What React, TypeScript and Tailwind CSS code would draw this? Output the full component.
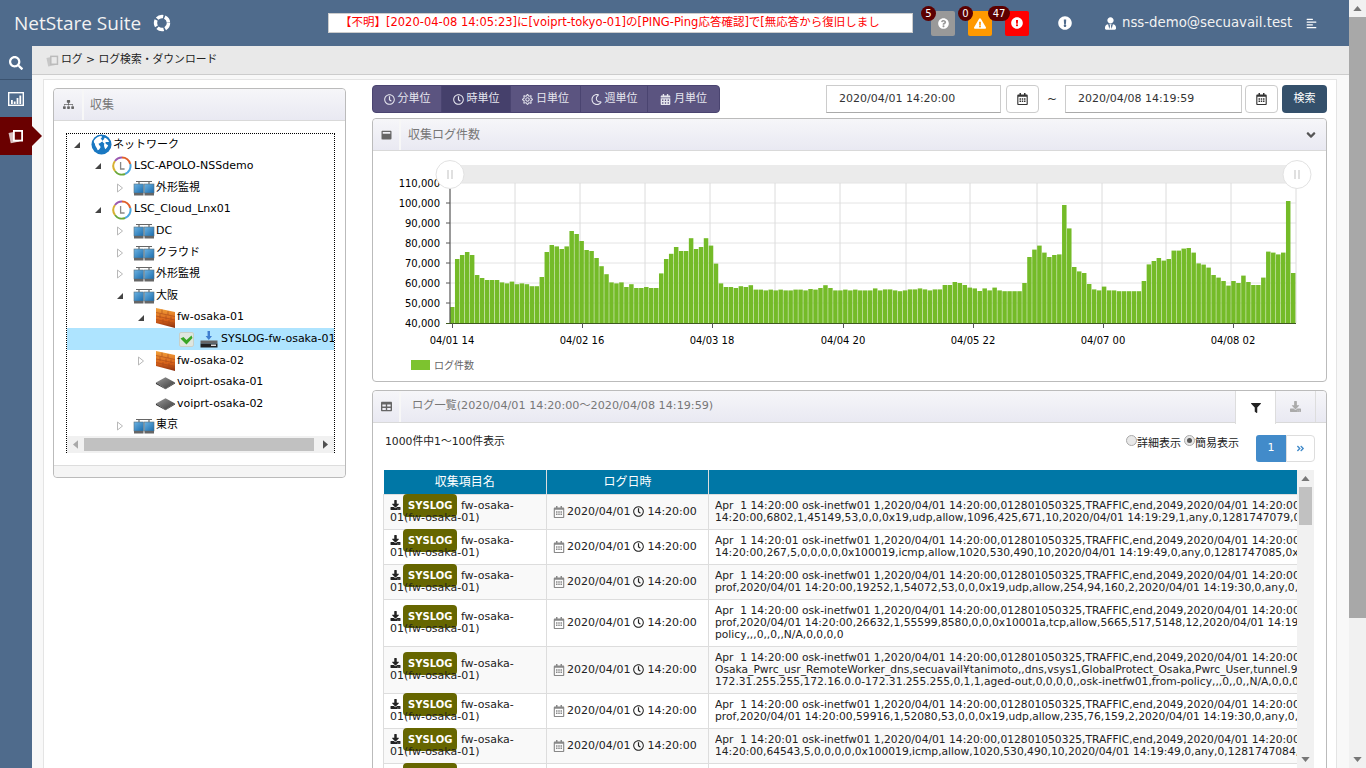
import {
  FaAlignLeft,
  FaAngleDoubleRight,
  FaAngleDown,
  FaCalendarAlt,
  FaDownload,
  FaExclamationCircle,
  FaFilter,
  FaQuestionCircle,
  FaRegCalendarAlt,
  FaRegClock,
  FaRegMoon,
  FaRegSun,
  FaSearch,
  FaSitemap,
  FaTable,
  FaUserTie,
  FaWindowMaximize,
  FaExclamationTriangle,
} from 'react-icons/fa'

const bars = [
  48, 72, 74, 75.5, 74, 64, 62.5, 61.5, 61.5, 61.5,
  60.3, 59.8, 60.7, 59.4, 59.8, 59.4, 58.4, 58.4, 63, 75.5,
  79, 78.3, 77, 78.3, 86, 84.5, 81, 76.5, 76, 72.5,
  68.4, 64.4, 60.3, 59.8, 60.3, 58, 59.4, 57.5, 57.5, 58,
  57.5, 57.5, 64.8, 72, 74.6, 78, 76, 76, 82.4, 77,
  78, 82.4, 78.7, 69.7, 59.8, 58, 58, 57.5, 58.4, 58,
  58.9, 56.7, 56.7, 56.3, 56.7, 56.3, 56.7, 56.3, 56.3, 56.7,
  56.7, 56.3, 57, 56.7, 57.5, 58.9, 57.5, 56.3, 56.3, 56.7,
  56.3, 56.7, 56.3,
  56.3, 56.3, 57.3, 56.3, 56.8, 56.8, 56.3, 55.9, 56.3, 56.8,
  56.8, 57.3, 56.8, 56.3, 56.8, 56.8, 59, 59, 60.5, 60,
  59, 57.7, 57.3, 56, 57.3, 56.3, 57.7, 56.3, 55.9, 55.9,
  55.9, 55.9, 60, 73, 76.7, 78.7, 75.2, 73, 74, 74.3,
  99, 87.3, 68, 65.8, 65, 59.5, 56.8, 56.3, 58.2, 56.3,
  56.3, 55.9, 55.9, 55.9, 55.9, 55.9, 61, 69.3, 71, 72.5,
  71.2, 72, 76.2, 76.2, 77.2, 77.5, 75.2, 69.8, 69.2, 67.7,
  64, 62.7, 61, 58.7, 61, 60, 63.7, 60.5, 59, 59,
  62.7, 75.7, 75.2, 74.3, 75.2, 101, 65,
]

const yLabels = ['110,000', '100,000', '90,000', '80,000', '70,000', '60,000', '50,000', '40,000']
const gridX = [515, 580, 645, 710, 775, 840, 906, 970, 1037, 1102, 1166, 1231, 1296]
const xTicks = [
  { x: 452.5, label: '04/01 14' },
  { x: 582.5, label: '04/02 16' },
  { x: 712.5, label: '04/03 18' },
  { x: 843.5, label: '04/04 20' },
  { x: 973.5, label: '04/05 22' },
  { x: 1103.5, label: '04/07 00' },
  { x: 1233.5, label: '04/08 02' },
]

const head1 = ' 1,2020/04/01 14:20:00,012801050325,TRAFFIC,end,2049,2020/04/01 14:20:00'
const rows = [
  { time: '14:20:00', lines: ['14:20:00,6802,1,45149,53,0,0,0x19,udp,allow,1096,425,671,10,2020/04/01 14:19:29,1,any,0,1281747079,0x0'] },
  { time: '14:20:01', lines: ['14:20:00,267,5,0,0,0,0,0x100019,icmp,allow,1020,530,490,10,2020/04/01 14:19:49,0,any,0,1281747085,0x0'] },
  { time: '14:20:00', lines: ['prof,2020/04/01 14:20:00,19252,1,54072,53,0,0,0x19,udp,allow,254,94,160,2,2020/04/01 14:19:30,0,any,0,128'] },
  { time: '14:20:00', lines: ['prof,2020/04/01 14:20:00,26632,1,55599,8580,0,0,0x10001a,tcp,allow,5665,517,5148,12,2020/04/01 14:19:30', 'policy,,,0,,0,,N/A,0,0,0,0'] },
  { time: '14:20:00', lines: ['Osaka_Pwrc_usr_RemoteWorker_dns,secuavail¥tanimoto,,dns,vsys1,GlobalProtect_Osaka,Pwrc_User,tunnel.99', '172.31.255.255,172.16.0.0-172.31.255.255,0,1,1,aged-out,0,0,0,0,,osk-inetfw01,from-policy,,,0,,0,,N/A,0,0,0,0'] },
  { time: '14:20:00', lines: ['prof,2020/04/01 14:20:00,59916,1,52080,53,0,0,0x19,udp,allow,235,76,159,2,2020/04/01 14:19:30,0,any,0,128'] },
  { time: '14:20:01', lines: ['14:20:00,64543,5,0,0,0,0,0x100019,icmp,allow,1020,530,490,10,2020/04/01 14:19:49,0,any,0,1281747084,0x0'] },
  { time: '14:20:00', lines: ['14:20:00,6802,1,45149,53,0,0,0x19,udp,allow,1096,425,671,10,2020/04/01 14:19:29,1,any,0,1281747079,0x0'] },
]

const units = [
  { label: '分単位', Icon: FaRegClock, active: false, w: 'w-[69px]' },
  { label: '時単位', Icon: FaRegClock, active: true, w: 'w-[69px]' },
  { label: '日単位', Icon: FaRegSun, active: false, w: 'w-[70px]' },
  { label: '週単位', Icon: FaRegMoon, active: false, w: 'w-[67px]' },
  { label: '月単位', Icon: FaCalendarAlt, active: false, w: 'w-[71px]' },
]

const levelPad = ['pl-[5px]', 'pl-[26px]', 'pl-[48px]', 'pl-[69px]']

function PagesIcon({ className }: { className: string }) {
  return (
    <svg viewBox="0 0 16 16" className={className}>
      <rect x="1.5" y="4" width="9" height="10.5" transform="rotate(-12 6 9)" fill="currentColor" opacity="0.75" />
      <rect x="5" y="2" width="10" height="11.5" fill="currentColor" />
      <rect x="6.8" y="3.8" width="6.4" height="7.9" fill="var(--hole)" />
    </svg>
  )
}

function ChartIcon() {
  return (
    <svg viewBox="0 0 16 14" className="w-[16px] h-[14px]">
      <rect x="0.7" y="0.7" width="14.6" height="12.6" fill="none" stroke="white" strokeWidth="1.4" />
      <path d="M3 12h1.8V8H3zM5.8 12h1.8V9.5H5.8zM8.6 12h1.8V6H8.6zM11.4 12h1.8V3.5h-1.8z" fill="white" />
    </svg>
  )
}

function GlobeIcon() {
  return (
    <svg viewBox="0 0 22 22" className="w-[21px] h-[21px]">
      <circle cx="11" cy="11" r="10.5" fill="#1a78c2" />
      <path d="M3 7c2-3 5-5 8-5 1 1 0 2-1 3 1 1 2 1 2 3-2 0-2 2-4 2 0 2 2 2 2 4-1 2-2 3-3 3-1-3-3-4-3-7-1-1-1-2-1-3zM14 4c2 0 4 2 5 4-1 1-3 0-4 1 0 2 2 2 3 3-1 2-2 3-3 4-1-2-2-4-1-6-1-1-2-1-2-3 1-1 2-1 2-3z" fill="white" />
    </svg>
  )
}

function CollectorIcon() {
  return (
    <svg viewBox="0 0 20 20" className="w-[20px] h-[20px]">
      <circle cx="10" cy="10" r="8.5" fill="white" />
      <path d="M10 1.5A8.5 8.5 0 0 1 18.2 8" fill="none" stroke="#e0602a" strokeWidth="2" />
      <path d="M18.3 8A8.5 8.5 0 0 1 13 18" fill="none" stroke="#4aa6e0" strokeWidth="2" />
      <path d="M13 18A8.5 8.5 0 0 1 3 15" fill="none" stroke="#6aa83a" strokeWidth="2" />
      <path d="M3 15A8.5 8.5 0 0 1 3 5" fill="none" stroke="#d8b030" strokeWidth="2" />
      <path d="M3 5A8.5 8.5 0 0 1 10 1.5" fill="none" stroke="#9a58b0" strokeWidth="2" />
      <path d="M8.6 6v7h4" fill="none" stroke="#888" strokeWidth="1.3" />
    </svg>
  )
}

function NetworkIcon() {
  return (
    <svg viewBox="0 0 22 16" className="w-[22px] h-[16px]">
      <defs>
        <linearGradient id="scr" x1="0" y1="0" x2="1" y2="1">
          <stop offset="0" stopColor="#6db3e2" />
          <stop offset="1" stopColor="#1a6cad" />
        </linearGradient>
      </defs>
      <path d="M3 1.5h16M6 1.5V5M16 1.5V5" stroke="#666" strokeWidth="1.2" fill="none" />
      <rect x="1" y="4" width="9.5" height="9" fill="url(#scr)" stroke="#56707f" strokeWidth="0.6" />
      <rect x="11.5" y="4" width="9.5" height="9" fill="url(#scr)" stroke="#56707f" strokeWidth="0.6" />
      <rect x="1" y="13" width="9.5" height="2.5" fill="#666" />
      <rect x="11.5" y="13" width="9.5" height="2.5" fill="#666" />
    </svg>
  )
}

function WallIcon() {
  return (
    <svg viewBox="0 0 21 22" className="w-[21px] h-[22px]">
      <defs>
        <linearGradient id="wall" x1="0" y1="0" x2="0" y2="1">
          <stop offset="0" stopColor="#f2a23a" />
          <stop offset="0.6" stopColor="#d9631a" />
          <stop offset="1" stopColor="#8a3010" />
        </linearGradient>
      </defs>
      <path d="M1 1l19 4v16L1 16z" fill="url(#wall)" />
      <path d="M1 5.5l19 4M1 9l19 4M1 12.5l19 4M7 2.5v4M13 4v4M5 7v4M11 8.5v4M16 9.5v4M8 12v4M14 13v4" stroke="#a8481a" strokeWidth="0.6" fill="none" />
    </svg>
  )
}

function RouterIcon() {
  return (
    <svg viewBox="0 0 22 14" className="w-[21px] h-[14px]">
      <defs>
        <linearGradient id="rt" x1="0" y1="0" x2="1" y2="1">
          <stop offset="0" stopColor="#9a9a9a" />
          <stop offset="1" stopColor="#3a3a3a" />
        </linearGradient>
      </defs>
      <path d="M11 1l10 5.5-10 6.5L1 6.5z" fill="url(#rt)" />
      <path d="M1 6.5v1.5l10 5.5 10-6V6.5l-10 6.5z" fill="#333" />
    </svg>
  )
}

function CheckIcon() {
  return (
    <svg viewBox="0 0 15 15" className="w-[15px] h-[15px] shrink-0">
      <rect x="0.5" y="0.5" width="14" height="14" rx="1.5" fill="#dfe6df" stroke="#c8d0c8" />
      <path d="M1.5 6.5l3-1.5 3 3 5-4.5 1 2.5-6 6.5z" fill="#38a626" />
    </svg>
  )
}

function SyslogIcon() {
  return (
    <svg viewBox="0 0 18 18" className="w-[18px] h-[18px]">
      <path d="M7.5 1h2.5v5h2l-3.2 4-3.2-4h2z" fill="#3f7fd0" />
      <rect x="0.5" y="10.5" width="17" height="3" fill="#666" />
      <rect x="0.5" y="13.5" width="17" height="4" fill="#222" />
      <rect x="11" y="14.5" width="5" height="1.5" fill="#ddd" />
    </svg>
  )
}

function Arrow({ open }: { open?: boolean }) {
  if (open) {
    return (
      <svg viewBox="0 0 8 8" className="w-[8px] h-[8px]">
        <path d="M7 1v6H1z" fill="#444" />
      </svg>
    )
  }
  return (
    <svg viewBox="0 0 8 10" className="w-[8px] h-[10px]">
      <path d="M1.5 1l5 4-5 4z" fill="#fff" stroke="#b8b8b8" />
    </svg>
  )
}

function TreeRow({ level, open, leaf, icon, label }: { level: number; open?: boolean; leaf?: boolean; icon: React.ReactNode; label: string }) {
  return (
    <div className={`flex items-center h-[21.62px] whitespace-nowrap ${levelPad[level]}`}>
      <span className="w-[18px] flex justify-center shrink-0 pr-[8px]">{leaf ? null : <Arrow open={open} />}</span>
      <span className="w-[22px] flex justify-center shrink-0">{icon}</span>
      <span className="ml-[1px]">{label}</span>
    </div>
  )
}

function PanelHeader({ icon, title, cell, children }: { icon: React.ReactNode; title: string; cell: string; children?: React.ReactNode }) {
  return (
    <div className="flex items-stretch h-[32px] bg-gradient-to-b from-[#f6f6f9] to-[#e9e9f2] border-b border-[#d9d9d9] rounded-t-[4px] shrink-0">
      <div className={`flex items-center justify-center border-r-2 border-[#f7f7f7] text-[#666] ${cell}`}>{icon}</div>
      {children ?? <div className="flex items-center text-[12px] text-[#777] pl-[6px]">{title}</div>}
    </div>
  )
}

function DateInput({ value, w }: { value: string; w: string }) {
  return (
    <div className={`h-[28px] border border-[#ccc] border-b-[#aaa] bg-white flex items-center pl-[12px] text-[11px] text-[#333] ${w}`}>{value}</div>
  )
}

function CalButton() {
  return (
    <div className="w-[33px] h-[28px] border border-[#ccc] rounded-[4px] bg-white flex items-center justify-center text-[#333]">
      <FaRegCalendarAlt className="w-[11px] h-[12px]" />
    </div>
  )
}

function Chart() {
  return (
    <svg viewBox="373 151 953 230" className="w-[953px] h-[230px] block">
      <rect x="450" y="165" width="847" height="18" fill="#ebebeb" />
      {[203, 223, 243, 263, 283, 303].map(y => (
        <line key={y} x1="450" x2="1296" y1={y} y2={y} stroke="#e4e4e4" />
      ))}
      <line x1="450" x2="1296" y1="183" y2="183" stroke="#e4e4e4" />
      {gridX.map(x => (
        <line key={x} x1={x} x2={x} y1="183" y2="323" stroke="#dcdcdc" />
      ))}
      {bars.map((v, i) => (
        <rect
          key={i}
          x={450 + i * 4.976}
          y={323 - (v - 40) * 2}
          width="4.5"
          height={(v - 40) * 2}
          fill="#6db71c"
          fillOpacity="0.95"
        />
      ))}
      <line x1="450" x2="450" y1="183" y2="323" stroke="#555" strokeWidth="1.2" />
      <line x1="446" x2="1296" y1="323.5" y2="323.5" stroke="#3f5a20" strokeWidth="1.2" />
      {[183, 203, 223, 243, 263, 283, 303].map(y => (
        <line key={y} x1="446" x2="450" y1={y} y2={y} stroke="#555" />
      ))}
      {yLabels.map((t, i) => (
        <text key={t} x="440" y={187 + i * 20} textAnchor="end" fontSize="10" fill="#000">{t}</text>
      ))}
      {xTicks.map(t => (
        <g key={t.label}>
          <line x1={t.x} x2={t.x} y1="323" y2="328" stroke="#555" />
          <text x={t.x - 0.5} y="344" textAnchor="middle" fontSize="10" fill="#000">{t.label}</text>
        </g>
      ))}
      <rect x="411" y="360" width="19" height="10" fill="#7dc32f" />
      <text x="434" y="369" fontSize="10" fill="#666">ログ件数</text>
      {[450, 1297].map(x => (
        <g key={x}>
          <circle cx={x} cy="174.5" r="14" fill="#fff" stroke="#e2e2e2" />
          <path d={`M${x - 2} 170v9M${x + 2} 170v9`} stroke="#ccc" strokeWidth="1.2" />
        </g>
      ))}
    </svg>
  )
}

function ScrollArrow({ up }: { up?: boolean }) {
  return (
    <div className="h-[17px] flex items-center justify-center shrink-0">
      <svg viewBox="0 0 10 6" className="w-[9px] h-[5px]">
        <path d={up ? 'M5 0l5 6H0z' : 'M5 6L0 0h10z'} fill="#777" />
      </svg>
    </div>
  )
}

export default function App() {
  return (
    <div className="flex w-[1366px] h-[768px] overflow-hidden bg-white text-[11px] text-[#333] [font-family:DejaVu_Sans,Noto_Sans_CJK_JP,sans-serif]">
      <div className="w-[1349px] flex flex-col shrink-0">
        {/* header */}
        <div className="h-[46px] bg-[#4f6b8c] flex items-center relative shrink-0 text-white">
          <div className="ml-[14px] w-[139px] text-[19px] [font-family:Open_Sans,sans-serif] text-[#f2f2f2]">NetStare Suite</div>
          <svg viewBox="0 0 18 18" className="w-[18px] h-[18px]">
            <circle cx="9" cy="9" r="6.5" fill="none" stroke="white" strokeWidth="3.4" strokeDasharray="6.6 1.57" />
          </svg>
          <div className="ml-[157px] w-[585px] h-[20px] bg-white border border-[#ccc] text-[#f00] pl-[11px] flex items-center whitespace-nowrap overflow-hidden text-[11.5px]">
            【不明】[2020-04-08 14:05:23]に[voiprt-tokyo-01]の[PING-Ping応答確認]で[無応答から復旧しまし
          </div>
          <div className="ml-[18px] w-[24px] h-[25px] bg-[#999] rounded-[2px] flex items-center justify-center relative">
            <FaQuestionCircle className="w-[11px] h-[11px]" />
            <span className="absolute -left-[10px] -top-[5px] w-[15px] h-[15px] rounded-full bg-[#5c0000] flex items-center justify-center text-[10px]">5</span>
          </div>
          <div className="ml-[13px] w-[24px] h-[25px] bg-[#f90] rounded-[2px] flex items-center justify-center relative">
            <FaExclamationTriangle className="w-[12px] h-[11px]" />
            <span className="absolute -left-[10px] -top-[5px] w-[15px] h-[15px] rounded-full bg-[#5c0000] flex items-center justify-center text-[10px]">0</span>
          </div>
          <div className="ml-[13px] w-[24px] h-[25px] bg-[#f00] rounded-[2px] flex items-center justify-center relative">
            <FaExclamationCircle className="w-[12px] h-[12px]" />
            <span className="absolute -left-[17px] -top-[5px] w-[22px] h-[15px] rounded-full bg-[#5c0000] flex items-center justify-center text-[10px]">47</span>
          </div>
          <FaExclamationCircle className="ml-[29px] w-[14px] h-[14px]" />
          <FaUserTie className="ml-[33px] w-[11px] h-[13px]" />
          <span className="ml-[6px] text-[13.3px] text-[#f2f2f2] whitespace-nowrap">nss-demo@secuavail.test</span>
          <FaAlignLeft className="ml-[13px] w-[13px] h-[11px]" />
        </div>

        <div className="flex flex-1 min-h-0">
          {/* sidebar */}
          <div className="w-[32px] bg-[#4f6b8c] shrink-0 text-white relative">
            <div className="h-[34px] flex items-center justify-center border-b border-[#3b5370]">
              <FaSearch className="w-[14px] h-[14px]" />
            </div>
            <div className="h-[37px] flex items-center justify-center">
              <ChartIcon />
            </div>
            <div className="h-[38px] bg-[#6a0000] flex items-center justify-center relative [--hole:#6a0000]">
              <PagesIcon className="w-[16px] h-[16px] text-white" />
              <span className="absolute left-[32px] top-[9px] w-0 h-0 border-y-[10px] border-y-transparent border-l-[10px] border-l-[#6a0000]" />
            </div>
          </div>

          <div className="flex-1 min-w-0 flex flex-col">
            {/* breadcrumb */}
            <div className="h-[29px] bg-[#e9e9e9] border-b border-[#ccc] flex items-center pl-[14px] gap-[2px] shrink-0 text-[#222] [--hole:#e9e9e9]">
              <PagesIcon className="w-[13px] h-[13px] text-[#bbb]" />
              <span className="text-[10.8px] pt-[1px]">ログ &gt; ログ検索・ダウンロード</span>
            </div>

            <div className="flex-1 min-h-0 bg-[#f8f8f8] pl-[11px] pr-[12px] pt-[4px]">
              <div className="h-full bg-white border-x border-t border-[#e4e4e4] flex pl-[9px] pt-[5px] overflow-hidden">
                {/* collect tree */}
                <div className="w-[293px] h-[390px] mt-[3px] border border-[#bbb] rounded-[4px] flex flex-col shrink-0">
                  <PanelHeader icon={<FaSitemap className="w-[11px] h-[11px]" />} title="収集" cell="w-[30px]" />
                  <div className="flex-1 min-h-0 pl-[12px] pr-[11px] pt-[12px]">
                    <div className="w-[269px] h-[320px] border-x border-t border-dotted border-black text-black flex flex-col overflow-hidden">
                      <div className="flex-1 min-h-0 overflow-hidden">
                        <TreeRow level={0} open icon={<GlobeIcon />} label="ネットワーク" />
                        <TreeRow level={1} open icon={<CollectorIcon />} label="LSC-APOLO-NSSdemo" />
                        <TreeRow level={2} icon={<NetworkIcon />} label="外形監視" />
                        <TreeRow level={1} open icon={<CollectorIcon />} label="LSC_Cloud_Lnx01" />
                        <TreeRow level={2} icon={<NetworkIcon />} label="DC" />
                        <TreeRow level={2} icon={<NetworkIcon />} label="クラウド" />
                        <TreeRow level={2} icon={<NetworkIcon />} label="外形監視" />
                        <TreeRow level={2} open icon={<NetworkIcon />} label="大阪" />
                        <TreeRow level={3} open icon={<WallIcon />} label="fw-osaka-01" />
                        <div className="flex items-center h-[21.62px] bg-[#aee4ff] whitespace-nowrap pl-[112px]">
                          <CheckIcon />
                          <span className="ml-[6px] shrink-0"><SyslogIcon /></span>
                          <span className="ml-[3px]">SYSLOG-fw-osaka-01</span>
                        </div>
                        <TreeRow level={3} icon={<WallIcon />} label="fw-osaka-02" />
                        <TreeRow level={3} leaf icon={<RouterIcon />} label="voiprt-osaka-01" />
                        <TreeRow level={3} leaf icon={<RouterIcon />} label="voiprt-osaka-02" />
                        <TreeRow level={2} icon={<NetworkIcon />} label="東京" />
                      </div>
                      <div className="h-[17px] bg-[#f1f1f1] flex items-center shrink-0">
                        <span className="w-[17px] flex justify-center"><svg viewBox="0 0 6 10" className="w-[5px] h-[9px]"><path d="M6 0v10L0 5z" fill="#aaa" /></svg></span>
                        <span className="w-[230px] h-[13px] bg-[#c1c1c1]" />
                        <span className="flex-1 flex justify-end pr-[6px]"><svg viewBox="0 0 6 10" className="w-[5px] h-[9px]"><path d="M0 0v10l6-5z" fill="#505050" /></svg></span>
                      </div>
                    </div>
                  </div>
                  <div className="h-[12px] bg-[#f5f5f5] border-t border-[#ddd] rounded-b-[4px] shrink-0" />
                </div>

                {/* right column */}
                <div className="w-[955px] ml-[26px] flex flex-col shrink-0">
                  <div className="flex items-center h-[28px] shrink-0">
                    <div className="flex h-[28px] rounded-[4px] overflow-hidden bg-[#5b5480] border border-[#4a4470] text-[#e6e6ee]">
                      {units.map(u => (
                        <div key={u.label} className={`flex items-center justify-center gap-[3px] border-r border-[#4a4470] last:border-r-0 ${u.w} ${u.active ? 'bg-[#45406b]' : ''}`}>
                          <u.Icon className="w-[11px] h-[11px]" />
                          <span>{u.label}</span>
                        </div>
                      ))}
                    </div>
                    <div className="ml-[106px]"><DateInput value="2020/04/01 14:20:00" w="w-[175px]" /></div>
                    <div className="ml-[5px]"><CalButton /></div>
                    <span className="w-[26px] text-center text-[12px]">~</span>
                    <DateInput value="2020/04/08 14:19:59" w="w-[177px]" />
                    <div className="ml-[3px]"><CalButton /></div>
                    <div className="ml-[4px] w-[45px] h-[28px] bg-[#34506b] rounded-[4px] text-white flex items-center justify-center">検索</div>
                  </div>

                  {/* chart panel */}
                  <div className="mt-[5px] h-[264px] border border-[#bbb] rounded-[4px] flex flex-col shrink-0">
                    <PanelHeader icon={<FaWindowMaximize className="w-[11px] h-[10px]" />} title="" cell="w-[28px]">
                      <div className="flex-1 flex items-center justify-between text-[12px] text-[#777] pl-[7px] pr-[8px]">
                        <span>収集ログ件数</span>
                        <FaAngleDown className="w-[14px] h-[14px] text-[#555]" />
                      </div>
                    </PanelHeader>
                    <Chart />
                  </div>

                  {/* log list */}
                  <div className="mt-[8px] border border-[#bbb] rounded-t-[4px] flex flex-col shrink-0">
                    <div className="flex items-stretch h-[32px] bg-gradient-to-b from-[#f6f6f9] to-[#e9e9f2] border-b border-[#d9d9d9] rounded-t-[4px]">
                      <div className="w-[28px] flex items-center justify-center border-r-2 border-[#f7f7f7] text-[#666]">
                        <FaTable className="w-[11px] h-[11px]" />
                      </div>
                      <div className="flex items-center pl-[11px] text-[#777] text-[11.2px]">ログ一覧(2020/04/01 14:20:00～2020/04/08 14:19:59)</div>
                      <div className="ml-auto mr-[10px] flex">
                        <div className="w-[41px] h-[33px] bg-white border-x border-[#ddd] flex items-center justify-center text-[#222]">
                          <FaFilter className="w-[10px] h-[10px]" />
                        </div>
                        <div className="w-[40px] flex items-center justify-center border-r border-[#ddd] text-[#aaa]">
                          <FaDownload className="w-[11px] h-[11px]" />
                        </div>
                      </div>
                    </div>
                    <div className="pl-[10px] pr-[11px]">
                      <div className="flex items-start h-[47px]">
                        <span className="ml-[2px] mt-[11px] text-[#222] text-[10.8px]">1000件中1～100件表示</span>
                        <div className="ml-auto mt-[12px] flex items-start text-[#222]">
                          <span className="w-[11px] h-[11px] rounded-full border border-[#aaa] bg-[#e8e8e8]" />
                          <span className="mt-[1px]">詳細表示</span>
                          <span className="ml-[3px] w-[11px] h-[11px] rounded-full border border-[#aaa] bg-[#e8e8e8] flex items-center justify-center">
                            <span className="w-[5px] h-[5px] rounded-full bg-[#555]" />
                          </span>
                          <span className="mt-[1px]">簡易表示</span>
                        </div>
                        <div className="ml-[17px] mt-[12px] flex h-[27px]">
                          <div className="w-[30px] bg-[#428bca] text-white flex items-center justify-center rounded-l-[3px]">1</div>
                          <div className="w-[29px] border border-[#ddd] rounded-r-[4px] flex items-center justify-center text-[#428bca]">
                            <FaAngleDoubleRight className="w-[9px] h-[9px]" />
                          </div>
                        </div>
                      </div>
                      <div className="flex">
                        <table className="w-[914px] table-fixed border-collapse text-[#222]">
                          <thead>
                            <tr className="h-[24px] bg-[#0077a6] text-white text-[12px]">
                              <th className="w-[163px] font-normal border-r border-[#ddd]">収集項目名</th>
                              <th className="w-[162px] font-normal border-r border-[#ddd]">ログ日時</th>
                              <th className="font-normal" />
                            </tr>
                          </thead>
                          <tbody>
                            {rows.map((r, i) => (
                              <tr key={i} className={i % 2 === 0 ? 'bg-[#f9f9f9]' : 'bg-white'}>
                                <td className="border border-[#ddd] px-[6px] py-[5px] leading-[12px] align-middle">
                                  <FaDownload className="inline w-[11px] h-[10px] mr-[2px] align-[-1px] text-[#222]" />
                                  <span className="bg-[#666600] text-white text-[10px] font-bold rounded-[4px] px-[5px] py-[6px]">SYSLOG</span>
                                  {' '}fw-osaka-01(fw-osaka-01)
                                </td>
                                <td className="border border-[#ddd] px-[6px] py-[5px] leading-[12px] align-middle whitespace-nowrap">
                                  <span className="flex items-center">
                                    <FaRegCalendarAlt className="w-[12px] h-[12px] mr-[2px] text-[#888]" />
                                    2020/04/01
                                    <FaRegClock className="w-[11px] h-[11px] mx-[3px] text-[#222]" />
                                    14:20:00
                                  </span>
                                </td>
                                <td className="border-y border-[#ddd] pl-[6px] py-[5px] leading-[12px] text-[10.7px] align-middle">
                                  <div className="overflow-hidden whitespace-pre">{`Apr  1 ${r.time} osk-inetfw01${head1}`}</div>
                                  {r.lines.map(l => (
                                    <div key={l} className="overflow-hidden whitespace-pre">{l}</div>
                                  ))}
                                </td>
                              </tr>
                            ))}
                          </tbody>
                        </table>
                        <div className="w-[17px] bg-[#f1f1f1] flex flex-col shrink-0 h-[298px]">
                          <ScrollArrow up />
                          <div className="w-[13px] h-[38px] bg-[#c1c1c1] ml-[2px]" />
                          <div className="flex-1" />
                          <ScrollArrow />
                        </div>
                      </div>
                    </div>
                  </div>
                </div>
              </div>
            </div>
          </div>
        </div>
      </div>

      {/* page scrollbar */}
      <div className="w-[17px] bg-[#f1f1f1] flex flex-col shrink-0">
        <ScrollArrow up />
        <div className="h-[601px] bg-[#a8a8a8]" />
        <div className="flex-1" />
        <ScrollArrow />
      </div>
    </div>
  )
}
